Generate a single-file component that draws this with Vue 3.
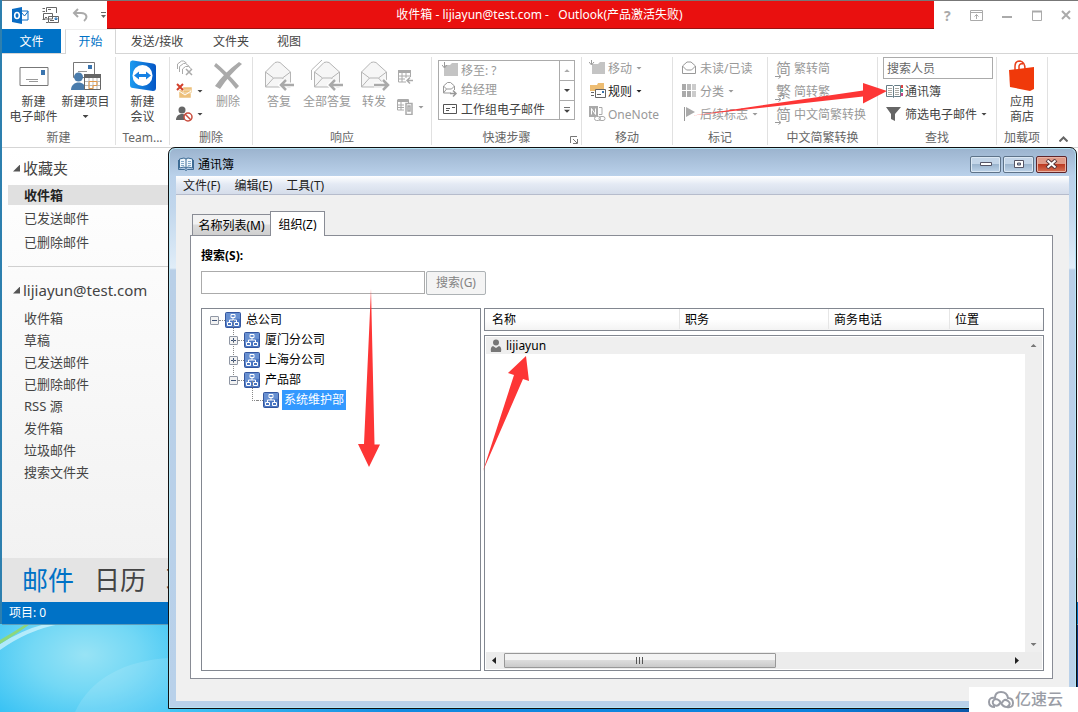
<script setup>
import { ref } from 'vue'

const favorites = ['收件箱', '已发送邮件', '已删除邮件']
const folders = ['收件箱', '草稿', '已发送邮件', '已删除邮件', 'RSS 源', '发件箱', '垃圾邮件', '搜索文件夹']
const tree = [
  { label: '总公司', level: 0, box: 'minus' },
  { label: '厦门分公司', level: 1, box: 'plus' },
  { label: '上海分公司', level: 1, box: 'plus' },
  { label: '产品部', level: 1, box: 'minus' },
  { label: '系统维护部', level: 2, box: '' }
]
const converters = [
  { glyph: '简', label: '繁转简' },
  { glyph: '繁', label: '简转繁' },
  { glyph: '简', label: '中文简繁转换' }
]
const selected = ref('系统维护部')
const people = ref('搜索人员')
const query = ref('')
</script>

<template>
  <div class="desktop">
    <svg class="wallpaper" viewBox="0 0 170 88" preserveAspectRatio="none" aria-hidden="true">
      <path d="M75 88C90 55 125 36 170 34V88Z" fill="#fff" opacity=".12" />
      <path d="M0 20Q22 6 45 0H60Q28 6 0 26Z" fill="#eafcff" opacity=".6" />
      <path d="M0 16Q14 8 26 0H30Q18 9 0 20Z" fill="#8cd77c" />
    </svg>

    <div class="outlook">
      <header class="titlebar">
        <div class="quick-access">
          <svg width="17" height="17" viewBox="0 0 17 17">
            <path d="M9 4h7v9H9z" fill="#fff" stroke="#0a6cc4" />
            <path d="M9 5l3.500 4L16 4.500" fill="none" stroke="#0a6cc4" />
            <path d="M0 2l10-2v17L0 15z" fill="#0a6cc4" />
            <ellipse cx="5" cy="8.500" rx="2.300" ry="3" fill="none" stroke="#fff" stroke-width="1.600" />
          </svg>
          <svg width="17" height="17" viewBox="0 0 17 17" fill="none" stroke="#666">
            <path d="M4.500 5V.5h10V6M.5 1.500H3M.5 4.500H3M.5 12.500H3M4 15.500h2" />
            <path d="M1.500 6.500h9V12h-9zM6.500 9.500h10v6h-10z" fill="#fff" />
            <path d="M3 10.500h2M8 13.500h4M6 2.500h3" /><path d="M13 11h2v1.500h-2z" stroke="#2873b8" />
          </svg>
          <svg width="16" height="14" viewBox="0 0 16 14" fill="none" stroke="#aaa" stroke-width="2">
            <path d="M6 1L2 5l4 4M2 5h7c6 0 7 5 3 8" />
          </svg>
          <svg width="5" height="7" viewBox="0 0 5 7"><path d="M0 .5h5" stroke="#666" /><path d="M0 3h5L2.500 6z" fill="#666" /></svg>
        </div>
        <div class="caption">收件箱 - lijiayun@test.com - &nbsp; Outlook(产品激活失败)</div>
        <div class="window-buttons">
          <button aria-label="帮助">?</button>
          <button aria-label="功能区显示选项"><svg width="13" height="11" viewBox="0 0 13 11" fill="none" stroke="#aaa"><path d="M.5.5h12v10H.5zM.5 2.500h12M6.500 9V4.500M4.500 6.500l2-2 2 2" /></svg></button>
          <button aria-label="最小化"><svg width="10" height="11" viewBox="0 0 10 11"><path d="M0 7h10" stroke="#aaa" stroke-width="2" /></svg></button>
          <button aria-label="最大化"><svg width="10" height="11" viewBox="0 0 10 11" fill="none" stroke="#aaa"><path d="M.5 1v9.500h9V1" /><path d="M0 1.500h10" stroke-width="2" /></svg></button>
          <button aria-label="关闭"><svg width="10" height="10" viewBox="0 0 10 10"><path d="M1 1l8 8M9 1L1 9" stroke="#aaa" stroke-width="2" /></svg></button>
        </div>
      </header>

      <nav class="tabs">
        <button class="file">文件</button>
        <button class="current">开始</button>
        <button class="send">发送/接收</button>
        <button class="folder">文件夹</button>
        <button class="view">视图</button>
      </nav>

      <section class="ribbon">
        <div class="group">
          <div class="tools centered">
            <button class="large wide">
              <svg width="30" height="32" viewBox="0 0 30 32" fill="none" stroke="#777"><path d="M1 7.500h28v18H1z" fill="#fff" /><path d="M7 19.500h12M10 21.500h9" stroke="#999" /><path d="M22 10h4v5h-4z" fill="#3a74ae" stroke="none" /></svg>
              新建<br>电子邮件
            </button>
            <button class="large mid">
              <svg width="30" height="32" viewBox="0 0 30 32" fill="none">
                <path d="M2.500 2.500h21v15h-21z" fill="#fff" stroke="#777" /><path d="M17 5h4v4h-4z" fill="#3a74ae" /><path d="M7 11.500h9" stroke="#999" />
                <circle cx="7.500" cy="17" r="4.500" fill="#4a7cac" /><path d="M0 30c0-10 15-10 15 0z" fill="#4a7cac" />
                <path d="M13.500 14.500h16v15h-16z" fill="#fff" stroke="#666" /><path d="M13 14h17v4H13z" fill="#666" />
                <path d="M18 18v11M22 18v11M26 18v11M14 21.500h15M14 25.500h15" stroke="#bbb" /><path d="M18 21.500h8v4h-4v3h-4z" stroke="#e39a4b" />
              </svg>
              新建项目
              <i class="arrow"></i>
            </button>
          </div>
          <div class="name">新建</div>
        </div>

        <div class="group">
          <div class="tools centered">
            <button class="large wide">
              <svg width="28" height="32" viewBox="0 0 28 32">
                <defs><linearGradient id="tv" x1="0" x2="1"><stop stop-color="#1c9bf0" /><stop offset="1" stop-color="#0456c5" /></linearGradient></defs>
                <path d="M1 3Q1 0 4 .5l20 3q3 .5 3 3V28q0 3-3 3L4 28q-3 0-3-3z" fill="url(#tv)" />
                <ellipse cx="13.500" cy="15.500" rx="10" ry="10.500" fill="#fff" />
                <path d="M5 15.500l5-4v2.500h7v-2.500l5 4-5 4V17h-7v2.500z" fill="#1681e4" />
              </svg>
              新建<br>会议
            </button>
          </div>
          <div class="name team">Team...</div>
        </div>

        <div class="group">
          <div class="tools delete">
            <div class="stack icons">
              <button class="small" aria-label="忽略"><svg width="17" height="16" viewBox="0 0 17 16" fill="none" stroke="#aaa"><path d="M1.500 9V4l4-3h2l3 2M3.500 12V6.500l4-3h2l4 3M6.500 14V9l3-2.500h3l3 2.500" /><path d="M10 9l6 6M16 9l-6 6" stroke-width="1.500" /></svg></button>
              <button class="small" aria-label="清理"><svg width="17" height="16" viewBox="0 0 17 16"><path d="M7 4h9v6H7zM3 7h12v8H3z" fill="#edc07a" stroke="#fff" stroke-width=".5" /><path d="M3 8l6 4 6-4" fill="none" stroke="#fff" /><path d="M1 1l6 6M7 1L1 7" stroke="#d2402c" stroke-width="2" /></svg><i class="arrow"></i></button>
              <button class="small" aria-label="垃圾邮件"><svg width="17" height="16" viewBox="0 0 17 16"><circle cx="6" cy="4" r="3.500" fill="#666" /><path d="M0 14c0-8 12-8 12 0z" fill="#666" /><circle cx="12" cy="11" r="4" fill="#fff" stroke="#c94d3e" stroke-width="1.500" /><path d="M9 8l6 6" stroke="#c94d3e" stroke-width="1.500" /></svg><i class="arrow"></i></button>
            </div>
            <button class="large off">
              <svg width="30" height="32" viewBox="0 0 30 32"><path d="M3 3Q13 11 26 26l-3 3Q13 16 1 6zM26 2l3 2Q17 14 7 29l-5-3Q11 13 26 2z" fill="#aaa" /></svg>
              删除
            </button>
          </div>
          <div class="name">删除</div>
        </div>

        <div class="group">
          <div class="tools respond">
            <button class="large off">
              <svg width="32" height="32" viewBox="0 0 32 32" fill="none" stroke="#b5b5b5"><path d="M2.500 12L12 2.500q2.500-1 5 0L27.500 12v15h-25z" fill="#f6f6f6" /><path d="M2.500 12l8 6h9l8-6M2.500 27l8-9M27.500 27l-8-9" /><path d="M31 25H18m5-5l-5 5 5 5" stroke="#fff" stroke-width="5" /><path d="M31 25H18m5-5l-5 5 5 5" stroke="#aaa" stroke-width="2.500" /></svg>
              答复
            </button>
            <button class="large off">
              <svg width="34" height="32" viewBox="0 0 34 32" fill="none" stroke="#b5b5b5"><path d="M1.500 20V10L12 0" /><path d="M4.500 12L14 2.500q2.500-1 5 0L29.500 12v15h-25z" fill="#f6f6f6" /><path d="M4.500 12l8 6h9l8-6M4.500 27l8-9M29.500 27l-8-9" /><path d="M33 25H20m5-5l-5 5 5 5" stroke="#fff" stroke-width="5" /><path d="M33 25H20m5-5l-5 5 5 5" stroke="#aaa" stroke-width="2.500" /></svg>
              全部答复
            </button>
            <button class="large off forward">
              <svg width="32" height="32" viewBox="0 0 32 32" fill="none" stroke="#b5b5b5"><path d="M3.500 12L13 2.500q2.500-1 5 0L28.500 12v15h-25z" fill="#f6f6f6" /><path d="M3.500 12l8 6h9l8-6M3.500 27l8-9M28.500 27l-8-9" /><path d="M16 25h14m-5-5l5 5-5 5" stroke="#fff" stroke-width="5" /><path d="M16 25h14m-5-5l5 5-5 5" stroke="#aaa" stroke-width="2.500" /></svg>
              转发
            </button>
            <div class="pair">
              <button class="small off" aria-label="会议"><svg width="17" height="15" viewBox="0 0 17 15" fill="none" stroke="#aaa"><path d="M1.500 3v9H9M1.500.5h12V7M5 3v9M9 3v5M2 6h11M2 9h6" /><path d="M1 1.500h13" stroke-width="3" /><path d="M16 10.500h-6m3-3l-3 3 3 3" stroke-width="1.500" /></svg></button>
              <button class="small off" aria-label="其他"><svg width="17" height="16" viewBox="0 0 17 16" fill="none" stroke="#aaa"><path d="M.5.5h11V4M.5 1v10H7M4 3v8M1 6h6M1 8.500h6" /><path d="M1 1.500h10" stroke-width="3" /><path d="M9 4.500h6v11H9zM11 7h2v5h-2z" fill="#fff" stroke-width="1.500" /></svg><i class="arrow"></i></button>
            </div>
          </div>
          <div class="name">响应</div>
        </div>

        <div class="group">
          <div class="tools">
            <div class="gallery">
              <div class="steps">
                <button class="small off"><svg width="16" height="16" viewBox="0 0 16 16"><path d="M2 3h6l2-2h6v13H2z" fill="#c4c4c4" /><path d="M2.500 0v5M0 3l2.500 3L5 3" fill="none" stroke="#999" /></svg>移至: ?</button>
                <button class="small off"><svg width="16" height="16" viewBox="0 0 16 16" fill="none" stroke="#999"><path d="M1.500 5l4-3.500h3l4 3.500v4M1.500 5v7H9M1.500 5l3 3h5l3-3M1.500 12l3-4" /><path d="M8 12.500h6m-3-3l3 3-3 3" stroke-width="1.500" /></svg>给经理</button>
                <button class="small"><svg width="16" height="16" viewBox="0 0 16 16" fill="none" stroke="#555"><path d="M1.500 3.500h13v9h-13zM4 7.500h4M4 9.500h3M10 6.500h3" /></svg>工作组电子邮件</button>
              </div>
              <div class="spin">
                <button aria-label="上一行"><i class="arrow up"></i></button>
                <button aria-label="下一行"><i class="arrow"></i></button>
                <button aria-label="更多"><i class="arrow more"></i></button>
              </div>
            </div>
          </div>
          <div class="name">快速步骤</div>
          <svg class="launcher" width="8" height="8" viewBox="0 0 8 8" fill="none" stroke="#777"><path d="M.5 7V.5H7M3 3l4 4M7.500 3v4.500H3" /></svg>
        </div>

        <div class="group">
          <div class="tools stack move">
            <button class="small off"><svg width="17" height="16" viewBox="0 0 17 16"><path d="M3 4h6l2-2h5v12H3z" fill="#c4c4c4" /><path d="M2.500 0v4M0 2l2.500 3L5 2" fill="none" stroke="#999" /></svg>移动<i class="arrow"></i></button>
            <button class="small dark"><svg width="17" height="16" viewBox="0 0 17 16"><path d="M1 2h7l1-2h6v8H1z" fill="#edbd73" /><path d="M6.500 6.500h10v8h-10z" fill="#fff" stroke="#666" /><path d="M13 8h2v2h-2z" fill="#3a74ae" /><path d="M8 11.500h4M2 9.500h3M2 12.500h3" stroke="#666" /></svg>规则<i class="arrow"></i></button>
            <button class="small off"><svg width="17" height="16" viewBox="0 0 17 16" fill="none" stroke="#aaa"><path d="M0 0h9v11H0z" fill="#aaa" stroke="none" /><path d="M2.500 8.500v-6l4 6v-6" stroke="#fff" /><path d="M10 1.500h3v7h-3" /><rect x="5.500" y="10.500" width="6" height="4" rx="2" fill="#fff" /><rect x="10" y="10.500" width="6" height="4" rx="2" /></svg>OneNote</button>
          </div>
          <div class="name">移动</div>
        </div>

        <div class="group">
          <div class="tools stack tags">
            <button class="small off"><svg width="16" height="16" viewBox="0 0 16 16" fill="none" stroke="#999"><path d="M.5 6L5 2h4l4.500 4v7.500H.5zM.5 6l4 4h5l4-4" /></svg>未读/已读</button>
            <button class="small off"><svg width="16" height="16" viewBox="0 0 16 16"><path d="M0 1h4v6H0zM0 8h4v6H0zM5 8h4v6H5z" fill="#aaa" /><path d="M5 1h4v6H5z" fill="#bbb" /><path d="M10 1h4v6h-4zM10 8h4v6h-4z" fill="#ccc" /></svg>分类<i class="arrow"></i></button>
            <button class="small off"><svg width="16" height="16" viewBox="0 0 16 16"><path d="M2.500 1v14" stroke="#999" /><path d="M4 1l9 5-9 5z" fill="#aaa" /></svg>后续标志<i class="arrow"></i></button>
          </div>
          <div class="name">标记</div>
        </div>

        <div class="group">
          <div class="tools stack chinese">
            <button v-for="item in converters" :key="item.label" class="small off">
              <span class="glyph">{{ item.glyph }}<svg width="7" height="5" viewBox="0 0 7 5"><path d="M0 2.500h5M3.500.5l2.500 2-2.500 2" fill="none" stroke="#999" /></svg></span>{{ item.label }}
            </button>
          </div>
          <div class="name">中文简繁转换</div>
        </div>

        <div class="group">
          <div class="tools stack find">
            <input v-model="people" class="people" type="text" aria-label="搜索人员">
            <button class="small"><svg width="17" height="16" viewBox="0 0 17 16" fill="none"><path d="M.5 2.500h6l1 1 1-1h6v11h-6l-1 1-1-1h-6zM7.500 3v11" fill="#fff" stroke="#667d86" /><path d="M2 5.500h4M2 7.500h4M2 9.500h4M2 11.500h4M9 5.500h4M9 7.500h4M9 9.500h4M9 11.500h4" stroke="#a9aaa4" /><path d="M16 2v3" stroke="#d44" stroke-width="2" /><path d="M16 6v3" stroke="#4a9" stroke-width="2" /><path d="M16 10v3" stroke="#c5458c" stroke-width="2" /></svg>通讯簿</button>
            <button class="small"><svg width="17" height="16" viewBox="0 0 17 16"><path d="M0 1h15L9 8v7l-4-2V8z" fill="#666" /></svg>筛选电子邮件<i class="arrow"></i></button>
          </div>
          <div class="name">查找</div>
        </div>

        <div class="group">
          <div class="tools centered">
            <button class="large wide">
              <svg width="28" height="32" viewBox="0 0 28 32"><path d="M7 10V6q0-5 5-5 5 1 5 8M11 9V6q1-3 4-2" fill="none" stroke="#e8401c" stroke-width="1.500" /><path d="M1 10l25-3v22l-4 2L2 27z" fill="#f0390a" /></svg>
              应用<br>商店
            </button>
          </div>
          <div class="name">加载项</div>
        </div>
        <div class="fold"><button aria-label="折叠功能区"><svg width="9" height="6" viewBox="0 0 9 6"><path d="M.5 5.500l4-4 4 4" fill="none" stroke="#666" stroke-width="2" /></svg></button></div>
      </section>

      <div class="workspace">
        <aside class="sidebar">
          <h2><i class="tri"></i>收藏夹</h2>
          <ul class="favorites">
            <li v-for="(item, i) in favorites" :key="item" :class="{ on: i === 0 }"><a href="#">{{ item }}</a></li>
          </ul>
          <h2 class="account"><i class="tri"></i>lijiayun@test.com</h2>
          <ul class="folders">
            <li v-for="item in folders" :key="item"><a href="#">{{ item }}</a></li>
          </ul>
        </aside>
        <nav class="modules"><a href="#" class="on">邮件</a><a href="#">日历</a><a href="#">联系人</a></nav>
      </div>
      <footer class="status">项目: 0</footer>
    </div>

    <div class="dialog" role="dialog" aria-labelledby="book-title">
      <header class="dialog-title">
        <svg width="16" height="14" viewBox="0 0 16 14"><path d="M1.500 2L6 1l2 1 2-1 4.500 1v9L10 10l-2 1-2-1-4.500 1z" fill="#eef6fc" stroke="#3d6b94" /><path d="M.5 3v9.500h6l1.500 1 1.500-1h6V3" fill="none" stroke="#3d6b94" /><path d="M8 2v10" stroke="#3d6b94" /><path d="M3 4.500h3M3 6.500h3M3 8.500h3M10 4.500h3M10 6.500h3M10 8.500h3" stroke="#83a9c9" /></svg>
        <span id="book-title">通讯簿</span>
        <div class="controls">
          <button aria-label="最小化"><svg width="12" height="6" viewBox="0 0 12 6"><path d="M.5 1.500h11v3H.5z" fill="#fff" stroke="#556" /></svg></button>
          <button aria-label="最大化"><svg width="12" height="10" viewBox="0 0 12 10"><path d="M1.500 1.500h9v7h-9z" fill="#fff" stroke="#556" /><path d="M4.500 4h3v2h-3z" fill="#9fb8d2" stroke="#556" /></svg></button>
          <button class="close" aria-label="关闭"><svg width="13" height="10" viewBox="0 0 13 10"><path d="M2 1l9 8M11 1L2 9" stroke="#54363a" stroke-width="4" /><path d="M2.500 1.500l8 7M10.500 1.500l-8 7" stroke="#fff" stroke-width="2" /></svg></button>
        </div>
      </header>
      <div class="client">
        <nav class="menu"><button>文件(F)</button><button>编辑(E)</button><button>工具(T)</button></nav>
        <div class="pages">
          <div class="page-tabs" role="tablist">
            <button role="tab" aria-selected="false">名称列表(M)</button>
            <button role="tab" aria-selected="true" class="active">组织(Z)</button>
          </div>
          <div class="page">
            <label class="search-label" for="query">搜索(S):</label>
            <div class="search-row">
              <input id="query" v-model="query" type="text">
              <button>搜索(G)</button>
            </div>
            <div class="panes">
              <ul class="tree" role="tree">
                <li v-for="node in tree" :key="node.label" role="treeitem" :class="'level' + node.level">
                  <span class="box" :class="node.box"></span>
                  <span class="dots"></span>
                  <svg width="16" height="16" viewBox="0 0 16 16"><rect x=".5" y=".5" width="15" height="15" rx="1" fill="#4a76c2" stroke="#34569f" /><path d="M1 1h14v6Q7 6 1 12z" fill="#86a9e0" opacity=".5" /><path d="M6 2.500h4v3H6zM2.500 10.500h4v3h-4zM9.500 10.500h4v3h-4zM8 6v2M4.500 10V8h7v2" fill="none" stroke="#fff" /></svg>
                  <button :class="{ picked: node.label === selected }" @click="selected = node.label">{{ node.label }}</button>
                </li>
              </ul>
              <div class="list">
                <table>
                  <thead><tr><th>名称</th><th>职务</th><th>商务电话</th><th>位置</th></tr></thead>
                  <tbody>
                    <tr>
                      <td><svg width="12" height="14" viewBox="0 0 12 14"><circle cx="6" cy="3.500" r="3" fill="#777" /><path d="M1 13Q0 8 3 7l3 2 3-2q3 1 2 6z" fill="#777" /></svg>lijiayun</td>
                      <td></td><td></td><td></td>
                    </tr>
                  </tbody>
                </table>
                <div class="vscroll"><i class="arrow up"></i><i class="arrow"></i></div>
                <div class="hscroll"><i class="arrow left"></i><div class="track"><div class="thumb"><i></i><i></i><i></i></div></div><i class="arrow right"></i></div>
              </div>
            </div>
          </div>
        </div>
      </div>
    </div>

    <svg class="marks" width="1078" height="712" viewBox="0 0 1078 712" fill="#fd3636" aria-hidden="true">
      <path d="M693 115.500L863 96.500V103.500L887 91L863 83V90.500Z" />
      <path d="M371 289L374.500 444.500H380L369 467L358 444H364Z" />
      <path d="M483 471L523 379L529 381L526 356L508 373L514 375Z" />
    </svg>

    <div class="watermark">
      <svg width="26" height="18" viewBox="0 0 26 18" fill="none" stroke="#9a9da6" stroke-width="2"><path d="M7 16q-6 0-6-5t6-4q0-6 6-6t7 6q5 0 5 5t-6 4q-4 0-6-4T7 8q-4 3-1 6 4 2 6-2M14 12q2-5 6-2t-1 6" /></svg>
      <span>亿速云</span>
    </div>
  </div>
</template>

<style>
body { margin: 0; }
</style>

<style scoped>
* { box-sizing: border-box; }
.desktop {
  position: relative; min-height: 100vh; overflow: hidden;
  background: linear-gradient(90deg, #2d7fae 0, #42c6f5 170px, #128ae0 400px, #0b82dd 75%, #093a86 100%);
  color: #444; font: 12px/15px "Noto Sans", "Noto Sans CJK SC", sans-serif;
}
button, input { font: inherit; color: inherit; }
button { border: 0; padding: 0; margin: 0; background: none; white-space: nowrap; }
ul { list-style: none; margin: 0; padding: 0; }
a { color: inherit; text-decoration: none; }
svg { flex: none; display: block; }
.wallpaper {
  position: absolute; left: 0; bottom: 0; width: 170px; height: 88px;
  background: radial-gradient(ellipse at 50% 35%, #98e3f5 0, #73d8f5 45%, #38c2f4 100%);
}
.outlook { position: absolute; left: 2px; right: 0; top: 0; background: #fff; border-top: 1px solid #777; }
.titlebar { display: grid; grid-template-columns: 105px 1fr 144px; height: 28px; }
.quick-access { display: flex; align-items: center; gap: 13px; padding-left: 10px; }
.caption { background: #e9100f; border-bottom: 1px solid #991313; color: #fff; text-align: center; line-height: 27px; padding-left: 38px; white-space: nowrap; overflow: hidden; }
.window-buttons { display: flex; align-items: center; justify-content: space-between; padding: 0 7px 0 10px; color: #aaa; font-size: 14px; font-weight: 700; }
.tabs { display: flex; height: 25px; border-bottom: 1px solid #d5d5d5; }
.tabs button { height: 24px; }
.tabs .file { width: 59px; background: #0072c6; color: #fff; }
.tabs .current { width: 51px; height: 25px; margin-left: 4px; padding-bottom: 2px; background: #fff; border: 1px solid #d5d5d5; border-bottom: 0; border-top-color: #eee; color: #0072c6; }
.tabs .send { width: 82px; }
.tabs .folder { width: 66px; }
.tabs .view { width: 50px; }

.ribbon {
  display: grid; height: 94px; border-bottom: 1px solid #d5d5d5;
  grid-template-columns: 114fr 54fr 83fr 179fr 150fr 91fr 95fr 110fr 119fr 51fr 30fr;
}
.group { position: relative; display: flex; flex-direction: column; border-right: 1px solid #e1e1e1; margin: 3px 0 2px; min-width: 0; }
.tools { flex: 1; display: flex; min-height: 0; }
.centered { justify-content: center; }
.name { text-align: center; line-height: 15px; color: #666; white-space: nowrap; }
.large { display: flex; flex-direction: column; align-items: center; width: 48px; padding-top: 3px; line-height: 15px; }
.large svg { margin-bottom: 2px; }
.large.wide { display: block; align-self: flex-start; width: 54px; text-align: center; }
.large.wide svg { margin: 0 auto 2px; }
.large.mid { width: 50px; }
.large .arrow { margin-top: 6px; }
.off { color: #999; }
.dark { color: #222; }
.arrow { display: block; flex: none; width: 6px; height: 3px; background: currentColor; clip-path: polygon(0 0, 100% 0, 50% 100%); }
.arrow.up { clip-path: polygon(50% 0, 100% 100%, 0 100%); }
.stack { flex-direction: column; gap: 1px; }
.small { display: flex; align-items: center; gap: 2px; height: 22px; text-align: left; }
.small .arrow { margin-left: 2px; }
.icons { display: flex; width: 28px; }
.delete { padding-left: 6px; }
.respond { padding-left: 2px; }
.large.forward { width: 46px; }
.pair { display: flex; flex-direction: column; gap: 8px; padding-top: 9px; }
.gallery { display: flex; flex: 1; height: 60px; margin: 3px 6px 0; border: 1px solid #ababab; }
.steps { flex: 1; padding-left: 3px; overflow: hidden; }
.steps .small { height: 20px; gap: 3px; }
.steps .small:first-child { height: 18px; }
.spin { width: 15px; display: grid; grid-template-rows: 1fr 1fr 1fr; border-left: 1px solid #ababab; }
.spin button { display: flex; align-items: center; justify-content: center; }
.spin button + button { border-top: 1px solid #ababab; }
.spin .arrow.more { height: 6px; clip-path: polygon(0 0, 100% 0, 100% 17%, 0 17%, 0 50%, 100% 50%, 50% 100%, 0 50%); }
.spin .arrow.up { color: #aaa; }
.launcher { position: absolute; right: 3px; bottom: 1px; }
.move { padding-left: 7px; }
.tags { padding-left: 9px; }
.chinese { padding-left: 8px; }
.glyph { position: relative; width: 16px; font-size: 15px; }
.glyph svg { position: absolute; left: -1px; bottom: -3px; background: #fff; }
.find { padding-left: 5px; }
.find .small { padding-left: 3px; }
.people { width: 110px; height: 22px; padding: 0 3px; border: 1px solid #ababab; color: #666; }
.fold { display: flex; align-items: flex-end; justify-content: center; padding-bottom: 5px; }

.workspace { display: flex; flex-direction: column; background: linear-gradient(#fff, #f0f0f0 480px); }
.sidebar { width: 167px; padding: 7px 0 75px 6px; font-size: 13px; }
.sidebar h2 { display: flex; align-items: center; gap: 3px; height: 26px; margin: 0; padding-left: 5px; font-size: 15px; font-weight: 400; }
.tri { width: 7px; height: 7px; background: #555; clip-path: polygon(100% 0, 100% 100%, 0 100%); }
.sidebar li { padding-left: 16px; }
.favorites { padding: 2px 0 12px; border-bottom: 1px solid #d0d0d0; }
.favorites li { line-height: 24px; }
.favorites .on { line-height: 20px; margin: 2px 0 1px; background: #e0e0e0; color: #222; font-weight: 700; }
.sidebar .account { margin-top: 10px; }
.folders { padding-top: 4px; }
.folders li { line-height: 22px; }
.modules { display: flex; gap: 20px; height: 44px; padding-left: 20px; background: #e4e4e4; font-size: 26px; line-height: 44px; white-space: nowrap; }
.modules .on { color: #0072c6; }
.status { height: 23px; padding-left: 7px; background: #0072c6; border-bottom: 1px solid #5c9dbb; color: #fff; line-height: 22px; }

.dialog {
  position: absolute; left: 168px; right: 1px; top: 147px; bottom: 3px; display: flex; flex-direction: column;
  padding: 0 7px 7px; border: 1px solid #111; border-radius: 7px 7px 0 0; color: #000;
  background: linear-gradient(#9bb3ce, #bad1ea 28px, #c1d6ec 60px, #e0edf8 120px, #b9cfe7 122px, #b9d1ea);
  box-shadow: inset 0 0 0 1px #b5e5f5;
}
.dialog-title { display: flex; align-items: center; gap: 4px; height: 28px; padding: 4px 2px 0; }
.controls { display: flex; gap: 2px; margin-left: auto; }
.controls button { display: flex; align-items: center; justify-content: center; width: 31px; height: 17px; border: 1px solid #5e7389; border-radius: 2px; background: linear-gradient(#c3d5e8 45%, #9cb5ce 50%, #bdd3e9); box-shadow: inset 0 0 0 1px #dbe8f4; }
.controls .close { border-color: #60252a; background: linear-gradient(#df9a88 45%, #bd3b23 50%, #d67356); box-shadow: inset 0 0 0 1px #eab3a4; }
.client { flex: 1; display: flex; flex-direction: column; background: #f0f0f0; min-height: 0; }
.menu { display: flex; gap: 14px; height: 19px; padding-left: 7px; background: linear-gradient(#fff, #e4eaf4 45%, #d5ddea); border-bottom: 1px solid #b6bccc; color: #222; }
.pages { flex: 1; display: flex; flex-direction: column; padding: 16px 16px 22px 14px; min-height: 0; }
.page-tabs { display: flex; align-items: flex-end; padding-left: 2px; }
.page-tabs button { height: 21px; width: 79px; border: 1px solid #898c95; border-bottom: 0; background: linear-gradient(#f2f2f2 45%, #dcdcdc 50%, #cfcfcf); }
.page-tabs .active { position: relative; height: 25px; width: 55px; margin: 0 0 -1px -1px; background: #fff; }
.page { flex: 1; display: flex; flex-direction: column; padding: 12px 8px 7px 10px; border: 1px solid #898c95; background: #fff; min-height: 0; }
.search-label { font-weight: 700; line-height: 16px; }
.search-row { display: flex; gap: 1px; height: 25px; margin-top: 6px; align-items: center; }
.search-row input { width: 224px; height: 23px; border: 1px solid #ababab; padding: 0 4px; }
.search-row button { width: 60px; height: 24px; border: 1px solid #adb2b5; border-radius: 2px; background: #f4f4f4; color: #838383; }
.panes { flex: 1; display: grid; grid-template-columns: 280fr 560fr; gap: 3px; margin-top: 13px; min-height: 0; }
.tree { border: 1px solid #828790; padding: 1px 0 0 8px; }
.tree li { position: relative; display: flex; align-items: center; height: 20px; }
.tree .level1 { padding-left: 19px; }
.tree .level2 { padding-left: 38px; }
.tree .box { width: 9px; height: 9px; }
.tree .plus, .tree .minus { border: 1px solid #9097a4; border-radius: 1px; background: linear-gradient(#3c5277, #3c5277) center / 5px 1px no-repeat, #f2f2f2; }
.tree .plus { background: linear-gradient(#3c5277, #3c5277) center / 5px 1px no-repeat, linear-gradient(#3c5277, #3c5277) center / 1px 5px no-repeat, #f2f2f2; }
.tree .dots { width: 6px; border-top: 1px dotted #888; }
.tree .level1::before { content: ""; position: absolute; left: 23px; top: -10px; height: 15px; border-left: 1px dotted #888; }
.tree .level2::before { content: ""; position: absolute; left: 42px; top: -9px; width: 6px; height: 19px; border-left: 1px dotted #888; border-bottom: 1px dotted #888; }
.tree button { height: 20px; margin-left: 3px; padding: 0 2px 2px; }
.tree .picked { background: #3399ff; color: #fff; }
.list { display: grid; grid-template: minmax(0, 1fr) / minmax(0, 1fr); }
.list > * { grid-area: 1 / 1; }
table { display: flex; flex-direction: column; gap: 4px; }
thead, tbody { display: block; border: 1px solid #828790; }
thead { height: 23px; background: linear-gradient(#fff 50%, #f3f3f3); }
tbody { flex: 1; padding: 1px; }
tr { display: grid; grid-template-columns: 194fr 149fr 121fr 94fr; }
th, td { padding: 0 7px; text-align: left; font-weight: 400; line-height: 22px; }
th + th { border-left: 1px solid #e6e6e6; padding-left: 5px; height: 20px; }
tbody tr { background: #efefef; height: 17px; }
td { display: flex; align-items: center; gap: 4px; padding: 0 4px; line-height: 15px; }
.vscroll, .hscroll { display: flex; justify-content: space-between; align-items: center; background: #efefef; color: #777; }
.vscroll { flex-direction: column; justify-self: end; width: 17px; margin: 29px 2px 19px 0; padding: 7px 0 6px; }
.hscroll { align-self: end; height: 17px; margin: 0 2px 2px; padding: 0 23px 0 6px; color: #222; background: #ececec; }
.hscroll .arrow { width: 4px; height: 7px; }
.arrow.left { clip-path: polygon(100% 0, 100% 100%, 0 50%); }
.arrow.right { clip-path: polygon(0 0, 100% 50%, 0 100%); }
.track { flex: 1; padding: 0 8px; }
.thumb { display: flex; align-items: center; justify-content: center; gap: 2px; width: 54%; height: 15px; border: 1px solid #989898; border-radius: 1px; background: linear-gradient(#f3f3f3 45%, #dcdcdc 50%, #cacaca); }
.thumb i { width: 1px; height: 7px; background: #555; }
.marks { position: absolute; left: 0; top: 0; pointer-events: none; }
.watermark { position: absolute; right: 0; bottom: 0; display: flex; align-items: center; gap: 1px; width: 109px; height: 25px; padding-left: 19px; background: #fff; color: #9a9da6; font-size: 16px; font-weight: 500; }
</style>
